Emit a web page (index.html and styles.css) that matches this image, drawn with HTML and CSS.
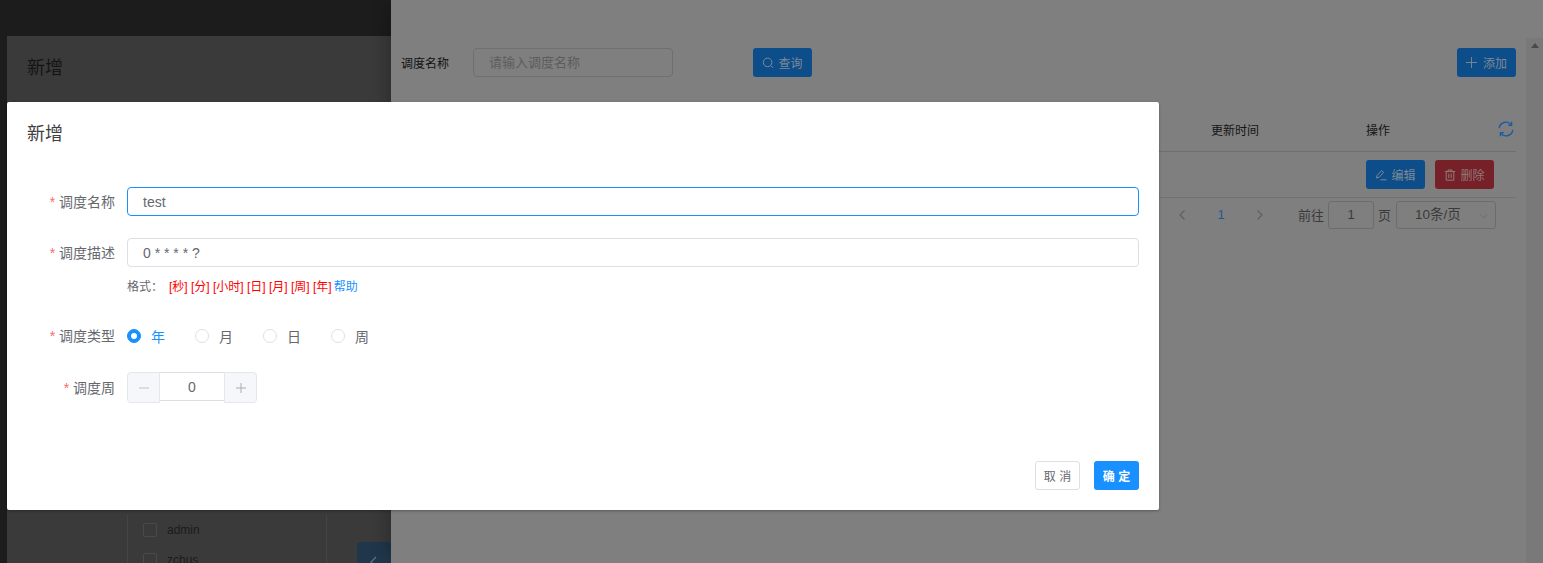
FILE: index.html
```html
<!DOCTYPE html>
<html lang="zh">
<head>
<meta charset="utf-8">
<title>新增</title>
<link rel="stylesheet" href="styles.css">
</head>
<body>
<div class="page">
  <aside class="left">
    <div class="under-dialog">
      <div class="under-title">新增</div>
      <div class="transfer">
        <div class="transfer-list">
          <div class="transfer-item"><span class="check"></span><span>admin</span></div>
          <div class="transfer-item"><span class="check"></span><span>zchus</span></div>
        </div>
        <div class="transfer-btn">
          <svg width="10" height="12" viewBox="0 0 10 12"><path d="M7 1 2 6l5 5" fill="none" stroke="#5d7488" stroke-width="1.2"/></svg>
        </div>
      </div>
    </div>
  </aside>
  <main class="main">
    <div class="main-body">
      <div class="filter">
        <span class="filter-label">调度名称</span>
        <span class="filter-input">请输入调度名称</span>
        <button class="btn btn-blue btn-query">
          <svg class="ico" viewBox="0 0 12 12"><circle cx="5.6" cy="5.4" r="4.3" fill="none" stroke="currentColor" stroke-width="1"/><path d="m8.8 8.6 2.2 2.2" stroke="currentColor" stroke-width="1"/></svg>查询
        </button>
        <button class="btn btn-blue btn-add">
          <svg class="ico-plus" viewBox="0 0 12 12"><path d="M6 0v12M0 6h12" stroke="currentColor" stroke-width="1"/></svg>添加
        </button>
      </div>
      <div class="thead">
        <span class="col-time">更新时间</span>
        <span class="col-op">操作</span>
        <svg class="refresh" viewBox="0 0 16 16"><path d="M1.2 7.2A6.8 6.8 0 0 1 13 3.4M14.8 8.8A6.8 6.8 0 0 1 3 12.6" fill="none" stroke="#1f5aa3" stroke-width="1.4"/><path d="M13.6 0.8v3.4h-3.4M2.4 15.2v-3.4h3.4" fill="none" stroke="#1f5aa3" stroke-width="1.4"/></svg>
      </div>
      <div class="trow">
        <button class="btn btn-blue">
          <svg class="ico" viewBox="0 0 12 12"><path d="M1.5 9 2 6.6 6.6 1.6l2 1.8L4 8.4zM5.5 10.8h6" fill="none" stroke="currentColor" stroke-width="1"/></svg>编辑
        </button>
        <button class="btn btn-red">
          <svg class="ico" viewBox="0 0 12 12"><path d="M.8 2.6h10.4M4 2.6V1h4v1.6M2.2 2.6v8.6h7.6V2.6M4.8 4.6v4.6M7.2 4.6v4.6" fill="none" stroke="currentColor" stroke-width="1"/></svg>删除
        </button>
      </div>
      <div class="pager">
        <svg class="pg-arrow" viewBox="0 0 8 12"><path d="M6.5 1.5 2 6l4.5 4.5" fill="none" stroke="#616161" stroke-width="1.3"/></svg>
        <span class="pg-num">1</span>
        <svg class="pg-arrow" viewBox="0 0 8 12"><path d="M1.5 1.5 6 6l-4.5 4.5" fill="none" stroke="#616161" stroke-width="1.3"/></svg>
        <span class="pg-goto">前往</span>
        <span class="pg-input">1</span>
        <span class="pg-page">页</span>
        <span class="pg-select">10条/页<svg class="pg-caret" viewBox="0 0 10 6"><path d="m1 1 4 4 4-4" fill="none" stroke="#6c6c6c" stroke-width="1"/></svg></span>
      </div>
    </div>
    <div class="scrollbar"><span class="scroll-up"></span></div>
  </main>
</div>

<section class="dialog">
  <header class="dialog-title">新增</header>
  <form class="form">
    <div class="row row-name">
      <label class="label"><i>*</i> 调度名称</label>
      <div class="input input-focus">test</div>
    </div>
    <div class="row row-desc">
      <label class="label"><i>*</i> 调度描述</label>
      <div class="input">0 * * * * ?</div>
    </div>
    <div class="hint">
      <span class="hint-label">格式：</span>
      <span class="hint-red">[秒] [分] [小时] [日] [月] [周] [年]</span>
      <a class="hint-link">帮助</a>
    </div>
    <div class="row row-type">
      <label class="label"><i>*</i> 调度类型</label>
      <div class="radios">
        <span class="radio on"><b></b>年</span>
        <span class="radio"><b></b>月</span>
        <span class="radio"><b></b>日</span>
        <span class="radio"><b></b>周</span>
      </div>
    </div>
    <div class="row row-week">
      <label class="label"><i>*</i> 调度周</label>
      <div class="stepper">
        <span class="step step-l"><svg viewBox="0 0 10 10"><path d="M0 5h10" stroke="#c0c4cc" stroke-width="1"/></svg></span>
        <span class="step-val">0</span>
        <span class="step step-r"><svg viewBox="0 0 10 10"><path d="M0 5h10M5 0v10" stroke="#a8acb4" stroke-width="1"/></svg></span>
      </div>
    </div>
  </form>
  <footer class="dialog-foot">
    <button class="foot-btn foot-cancel">取 消</button>
    <button class="foot-btn foot-ok">确 定</button>
  </footer>
</section>
</body>
</html>
```
FILE: styles.css
```css
* { box-sizing: border-box; }
html, body { margin: 0; height: 100%; }
body {
  position: relative;
  height: 563px;
  overflow: hidden;
  background: #7f7f7f;
  font-family: "Liberation Sans", "Noto Sans CJK SC", sans-serif;
  font-size: 12px;
  color: #222;
}
button { font: inherit; padding: 0; border: 0; }

.page { display: flex; height: 563px; }

/* left, darkened layer */
.left {
  width: 391px;
  flex: none;
  background: #1c1c1c;
  padding: 36px 0 0 7px;
  overflow: hidden;
}
.under-dialog {
  width: 1152px;
  height: 600px;
  background: #3a3a3a;
  padding: 20px;
}
.under-title { font-size: 18px; line-height: 24px; color: #151515; }
.transfer {
  display: flex;
  align-items: flex-start;
  margin: 435px 0 0 100px;
}
.transfer-list {
  flex: none;
  width: 200px;
  height: 120px;
  border-left: 1px solid #454545;
  border-right: 1px solid #454545;
  padding: 0 0 0 15px;
}
.transfer-item {
  display: flex;
  align-items: center;
  gap: 10px;
  height: 30px;
  color: #1a1a1a;
}
.check {
  width: 14px;
  height: 14px;
  border: 1px solid #4a4a4a;
  border-radius: 2px;
}
.transfer-btn {
  flex: none;
  width: 34px;
  height: 40px;
  margin: 27px 0 0 30px;
  background: #20364a;
  border-radius: 3px;
  display: flex;
  align-items: center;
  justify-content: center;
}

/* right, main layer */
.main {
  flex: 1;
  display: flex;
  box-shadow: -12px 0 16px -8px rgba(0, 0, 0, .22);
  z-index: 1;
  background: #7f7f7f;
}
.main-body { width: 1125px; padding: 48px 0 0 10px; }
.scrollbar {
  width: 17px;
  margin: 38px 0 0 10px;
  padding-top: 5px;
  background: #797979;
  display: flex;
  justify-content: center;
}
.scroll-up {
  width: 0;
  height: 0;
  border-left: 4px solid transparent;
  border-right: 4px solid transparent;
  border-bottom: 5px solid #4a4a4a;
}

.filter { display: flex; align-items: center; height: 29px; }
.filter-label { width: 72px; color: #111; }
.filter-input {
  width: 200px;
  height: 29px;
  line-height: 27px;
  padding-left: 15px;
  border: 1px solid #6f6f6f;
  border-radius: 4px;
  font-size: 13px;
  color: #5d5d5d;
  margin-right: 80px;
}
.btn {
  display: inline-flex;
  align-items: center;
  justify-content: center;
  gap: 4px;
  width: 59px;
  height: 29px;
  border-radius: 3px;
  font-size: 12px;
  color: #7f8a94;
}
.btn-blue { background: #0c4d8a; }
.btn-red { background: #762027; color: #917a7a; }
.btn-add { margin-left: auto; gap: 6px; }
.ico { width: 12px; height: 12px; flex: none; }
.ico-plus { width: 11px; height: 11px; flex: none; }

.thead {
  display: flex;
  align-items: center;
  height: 44px;
  margin-top: 31px;
  border-bottom: 1px solid #6e6e6e;
  color: #151515;
  padding-left: 810px;
}
.col-time { width: 155px; }
.col-op { width: 133px; }
.refresh { width: 16px; height: 16px; margin-top: -1px; margin-left: -1px; }

.trow {
  display: flex;
  gap: 10px;
  height: 46px;
  padding: 8px 0 0 965px;
  border-bottom: 1px solid #727272;
}
.pager {
  display: flex;
  align-items: center;
  height: 29px;
  margin-top: 2px;
  padding-left: 777px;
  font-size: 13px;
  color: #3a3a3a;
}
.pg-arrow { width: 8px; height: 12px; flex: none; }
.pg-num { width: 70px; text-align: center; color: #1e5a98; font-size: 13px; }
.pg-goto { margin-left: 34px; width: 30px; }
.pg-input, .pg-select {
  height: 28px;
  border: 1px solid #6c6c6c;
  border-radius: 3px;
  line-height: 26px;
  text-align: center;
}
.pg-input { width: 46px; }
.pg-page { margin: 0 5px 0 4px; }
.pg-select {
  width: 100px;
  position: relative;
  text-align: left;
  padding-left: 18px;
  font-size: 13.5px;
}
.pg-caret { width: 9px; height: 6px; position: absolute; right: 7px; top: 11px; }

/* top dialog */
.dialog {
  position: absolute;
  left: 7px;
  top: 102px;
  width: 1152px;
  height: 408px;
  background: #fff;
  border-radius: 2px;
  box-shadow: 0 1px 3px rgba(0, 0, 0, .3);
  z-index: 5;
  display: flex;
  flex-direction: column;
  color: #66686d;
}
.dialog-title {
  padding: 20px 20px 0;
  font-size: 18px;
  line-height: 24px;
  color: #3f4043;
}
.form { padding: 41px 20px 0; flex: 1; }
.row { display: flex; align-items: center; }
.label {
  width: 100px;
  flex: none;
  text-align: right;
  padding-right: 12px;
  font-size: 14px;
  line-height: 26px;
  white-space: nowrap;
}
.label i { color: #f56c6c; font-style: normal; }
.input {
  flex: 1;
  height: 29px;
  line-height: 28px;
  padding-left: 15px;
  border: 1px solid #dcdfe6;
  border-radius: 4px;
  font-size: 14px;
  color: #66686d;
}
.input-focus { border-color: #1890ff; }
.row-desc { margin-top: 22px; }
.hint {
  display: flex;
  align-items: center;
  height: 18px;
  margin: 9px 0 0 100px;
  font-size: 12px;
}
.hint-label { width: 42px; }
.hint-red { color: #f00; white-space: nowrap; }
.hint-link { color: #1890ff; margin-left: 2px; }
.row-type { margin-top: 27px; height: 29px; }
.radios { display: flex; font-size: 14px; }
.radio {
  display: flex;
  align-items: center;
  width: 68px;
  gap: 10px;
}
.radio b {
  width: 14px;
  height: 14px;
  border: 1px solid #dcdfe6;
  border-radius: 50%;
  flex: none;
}
.radio.on { color: #1890ff; }
.radio.on b {
  background: #1890ff;
  border-color: #1890ff;
  position: relative;
}
.radio.on b::after {
  content: "";
  position: absolute;
  left: 3px;
  top: 3px;
  width: 6px;
  height: 6px;
  background: #fff;
  border-radius: 50%;
}
.row-week { margin-top: 22px; }
.stepper {
  display: flex;
  width: 130px;
  height: 31px;
}
.step {
  width: 33px;
  height: 31px;
  background: #f5f7fa;
  border: 1px solid #e4e7ed;
  display: flex;
  align-items: center;
  justify-content: center;
}
.step svg { width: 10px; height: 10px; }
.step-l { border-radius: 4px 0 0 4px; }
.step-r { border-radius: 0 4px 4px 0; }
.step-val {
  flex: 1;
  height: 29px;
  border-top: 1px solid #dcdfe6;
  border-bottom: 1px solid #dcdfe6;
  line-height: 28px;
  text-align: center;
  font-size: 14px;
}
.dialog-foot {
  display: flex;
  justify-content: flex-end;
  gap: 14px;
  padding: 0 20px 20px;
}
.foot-btn {
  width: 45px;
  height: 29px;
  border-radius: 3px;
  font-size: 12px;
}
.foot-cancel { background: #fff; border: 1px solid #dcdfe6; color: #66686d; }
.foot-ok { background: #1890ff; color: #fff; font-weight: 700; }
```
